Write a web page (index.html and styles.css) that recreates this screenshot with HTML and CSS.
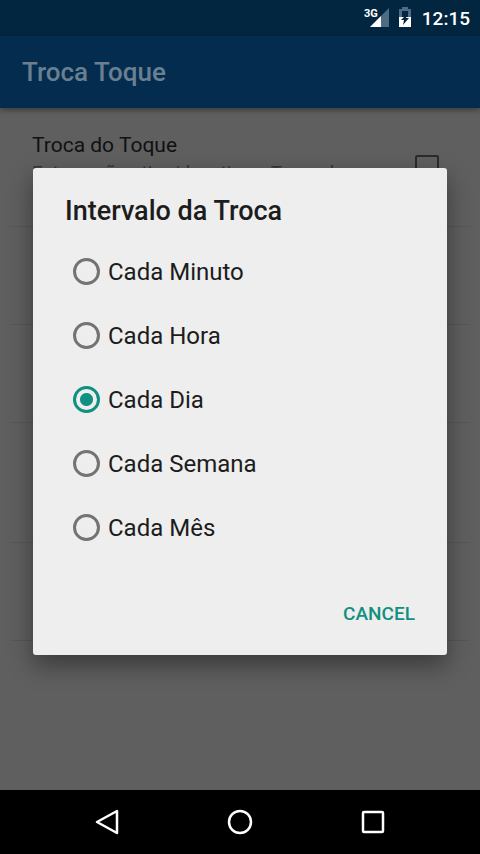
FILE: index.html
```html
<!DOCTYPE html>
<html lang="pt">
<head>
<meta charset="utf-8">
<meta name="viewport" content="width=device-width, initial-scale=1">
<title>Troca Toque</title>
<link rel="stylesheet" href="styles.css">
</head>
<body>
<div class="screen">
  <header class="status-bar">
    <svg class="signal" viewBox="0 0 26 22" aria-label="3G">
      <path d="M25 2V21H6Z" fill="#4d6b82"/>
      <path d="M17 10V21H6Z" fill="#fff"/>
      <text x="0" y="11" class="signal-text">3G</text>
    </svg>
    <svg class="battery" viewBox="0 0 14 22" aria-hidden="true">
      <path d="M4 1H10V3H13V11H1V3H4Z" fill="#4d6b82"/>
      <path d="M4 5H10V11H4Z" fill="#032640"/>
      <path d="M1 11H13V21H1Z" fill="#fff"/>
      <path d="M10 7L3 14H6L5 19L11 12H8Z" fill="#032640"/>
    </svg>
    <time class="clock">12:15</time>
  </header>
  <div class="app-bar"><h1 class="app-title">Troca Toque</h1></div>
  <main class="content">
    <ul class="settings">
      <li class="setting setting-first">
        <label class="setting-text" for="toggle">
          <span class="setting-name">Troca do Toque</span>
          <span class="setting-note">Esta opção ativa/desativa o Troca do</span>
        </label>
        <input class="toggle" type="checkbox" id="toggle">
      </li>
      <li class="setting"></li>
      <li class="setting"></li>
      <li class="setting setting-tall"></li>
      <li class="setting"></li>
    </ul>
    <form class="dialog" role="dialog" aria-labelledby="dialog-title">
      <h2 class="dialog-title" id="dialog-title">Intervalo da Troca</h2>
      <div class="options">
        <label class="option"><input class="radio" type="radio" name="interval">Cada Minuto</label>
        <label class="option"><input class="radio" type="radio" name="interval">Cada Hora</label>
        <label class="option"><input class="radio" type="radio" name="interval" checked>Cada Dia</label>
        <label class="option"><input class="radio" type="radio" name="interval">Cada Semana</label>
        <label class="option"><input class="radio" type="radio" name="interval">Cada Mês</label>
      </div>
      <div class="actions"><button class="cancel" type="button">CANCEL</button></div>
    </form>
  </main>
  <nav class="nav-bar">
    <button class="nav-button" type="button" aria-label="Back"><svg class="nav-icon" viewBox="0 0 28 28"><path d="M24 3V25L4 14Z"/></svg></button>
    <button class="nav-button" type="button" aria-label="Home"><svg class="nav-icon" viewBox="0 0 28 28"><circle cx="14" cy="14" r="11"/></svg></button>
    <button class="nav-button" type="button" aria-label="Recent"><svg class="nav-icon" viewBox="0 0 28 28"><rect x="4" y="4" width="20" height="20" rx="1"/></svg></button>
  </nav>
</div>
</body>
</html>
```
FILE: styles.css
```css
* { box-sizing: border-box; }
body {
  margin: 0;
  font-family: Roboto, "Liberation Sans", sans-serif;
  color: #1c1c1c;
}
.screen {
  min-height: 100vh;
  display: flex;
  flex-direction: column;
  background: #5f5f5f;
}
.status-bar {
  height: 36px;
  padding: 0 10px;
  display: flex;
  align-items: center;
  justify-content: flex-end;
  background: #032640;
  color: #fff;
}
.signal { width: 26px; height: 22px; margin: 0 8px 2px 0; }
.signal-text { font-size: 11px; font-weight: 700; fill: #fff; }
.battery { width: 14px; height: 22px; margin: 0 10px 2px 0; }
.clock { font-size: 19px; font-weight: 500; }
.app-bar {
  height: 72px;
  padding: 0 22px;
  display: flex;
  align-items: center;
  background: #042c4f;
  box-shadow: 0 2px 6px rgba(0, 0, 0, 0.4);
}
.app-title {
  margin: 0;
  font-size: 26px;
  font-weight: 500;
  color: #6a7f90;
}
.content {
  flex: 1;
  display: grid;
  align-items: start;
}
.settings, .dialog { grid-area: 1 / 1; }
.settings {
  margin: 0;
  padding: 0 10px;
  list-style: none;
}
.setting {
  height: 98px;
  border-bottom: 1px solid #575757;
}
.setting-tall { height: 120px; }
.setting-first {
  height: 119px;
  padding: 0 31px 0 22px;
  display: flex;
  align-items: center;
  justify-content: space-between;
}
.setting-text {
  align-self: flex-start;
  display: flex;
  flex-direction: column;
  padding-top: 23px;
}
.setting-name { font-size: 21px; line-height: 28px; color: #111; }
.setting-note { font-size: 19px; line-height: 28px; color: #363636; white-space: nowrap; }
.toggle {
  appearance: none;
  width: 24px;
  height: 24px;
  margin: 0;
  border: 2px solid #2b2b2b;
  border-radius: 2px;
}
.dialog {
  margin: 60px 33px 0;
  padding: 25px 32px 18px;
  background: #eee;
  border-radius: 3px;
  box-shadow: 0 10px 24px rgba(0, 0, 0, 0.4);
}
.dialog-title {
  margin: 0 0 11px;
  font-size: 27px;
  line-height: 36px;
  font-weight: 500;
}
.option {
  height: 64px;
  padding-left: 8px;
  display: flex;
  align-items: center;
  gap: 8px;
  font-size: 24px;
}
.radio {
  appearance: none;
  width: 27px;
  height: 27px;
  margin: 0 0 2px;
  border: 3px solid #737373;
  border-radius: 50%;
}
.radio:checked {
  border-color: #109080;
  background: radial-gradient(circle, #109080 6px, transparent 7px);
}
.actions { display: flex; justify-content: flex-end; margin-top: 29px; }
.cancel {
  height: 48px;
  padding: 0;
  border: 0;
  background: none;
  font: 500 19px Roboto, "Liberation Sans", sans-serif;
  color: #109080;
}
.nav-bar {
  height: 64px;
  padding: 0 40px;
  display: flex;
  background: #000;
}
.nav-button {
  flex: 1;
  padding: 0;
  border: 0;
  background: none;
  display: flex;
  align-items: center;
  justify-content: center;
}
.nav-icon {
  width: 28px;
  height: 28px;
  fill: none;
  stroke: #fff;
  stroke-width: 2.5;
  stroke-linejoin: round;
}
```
